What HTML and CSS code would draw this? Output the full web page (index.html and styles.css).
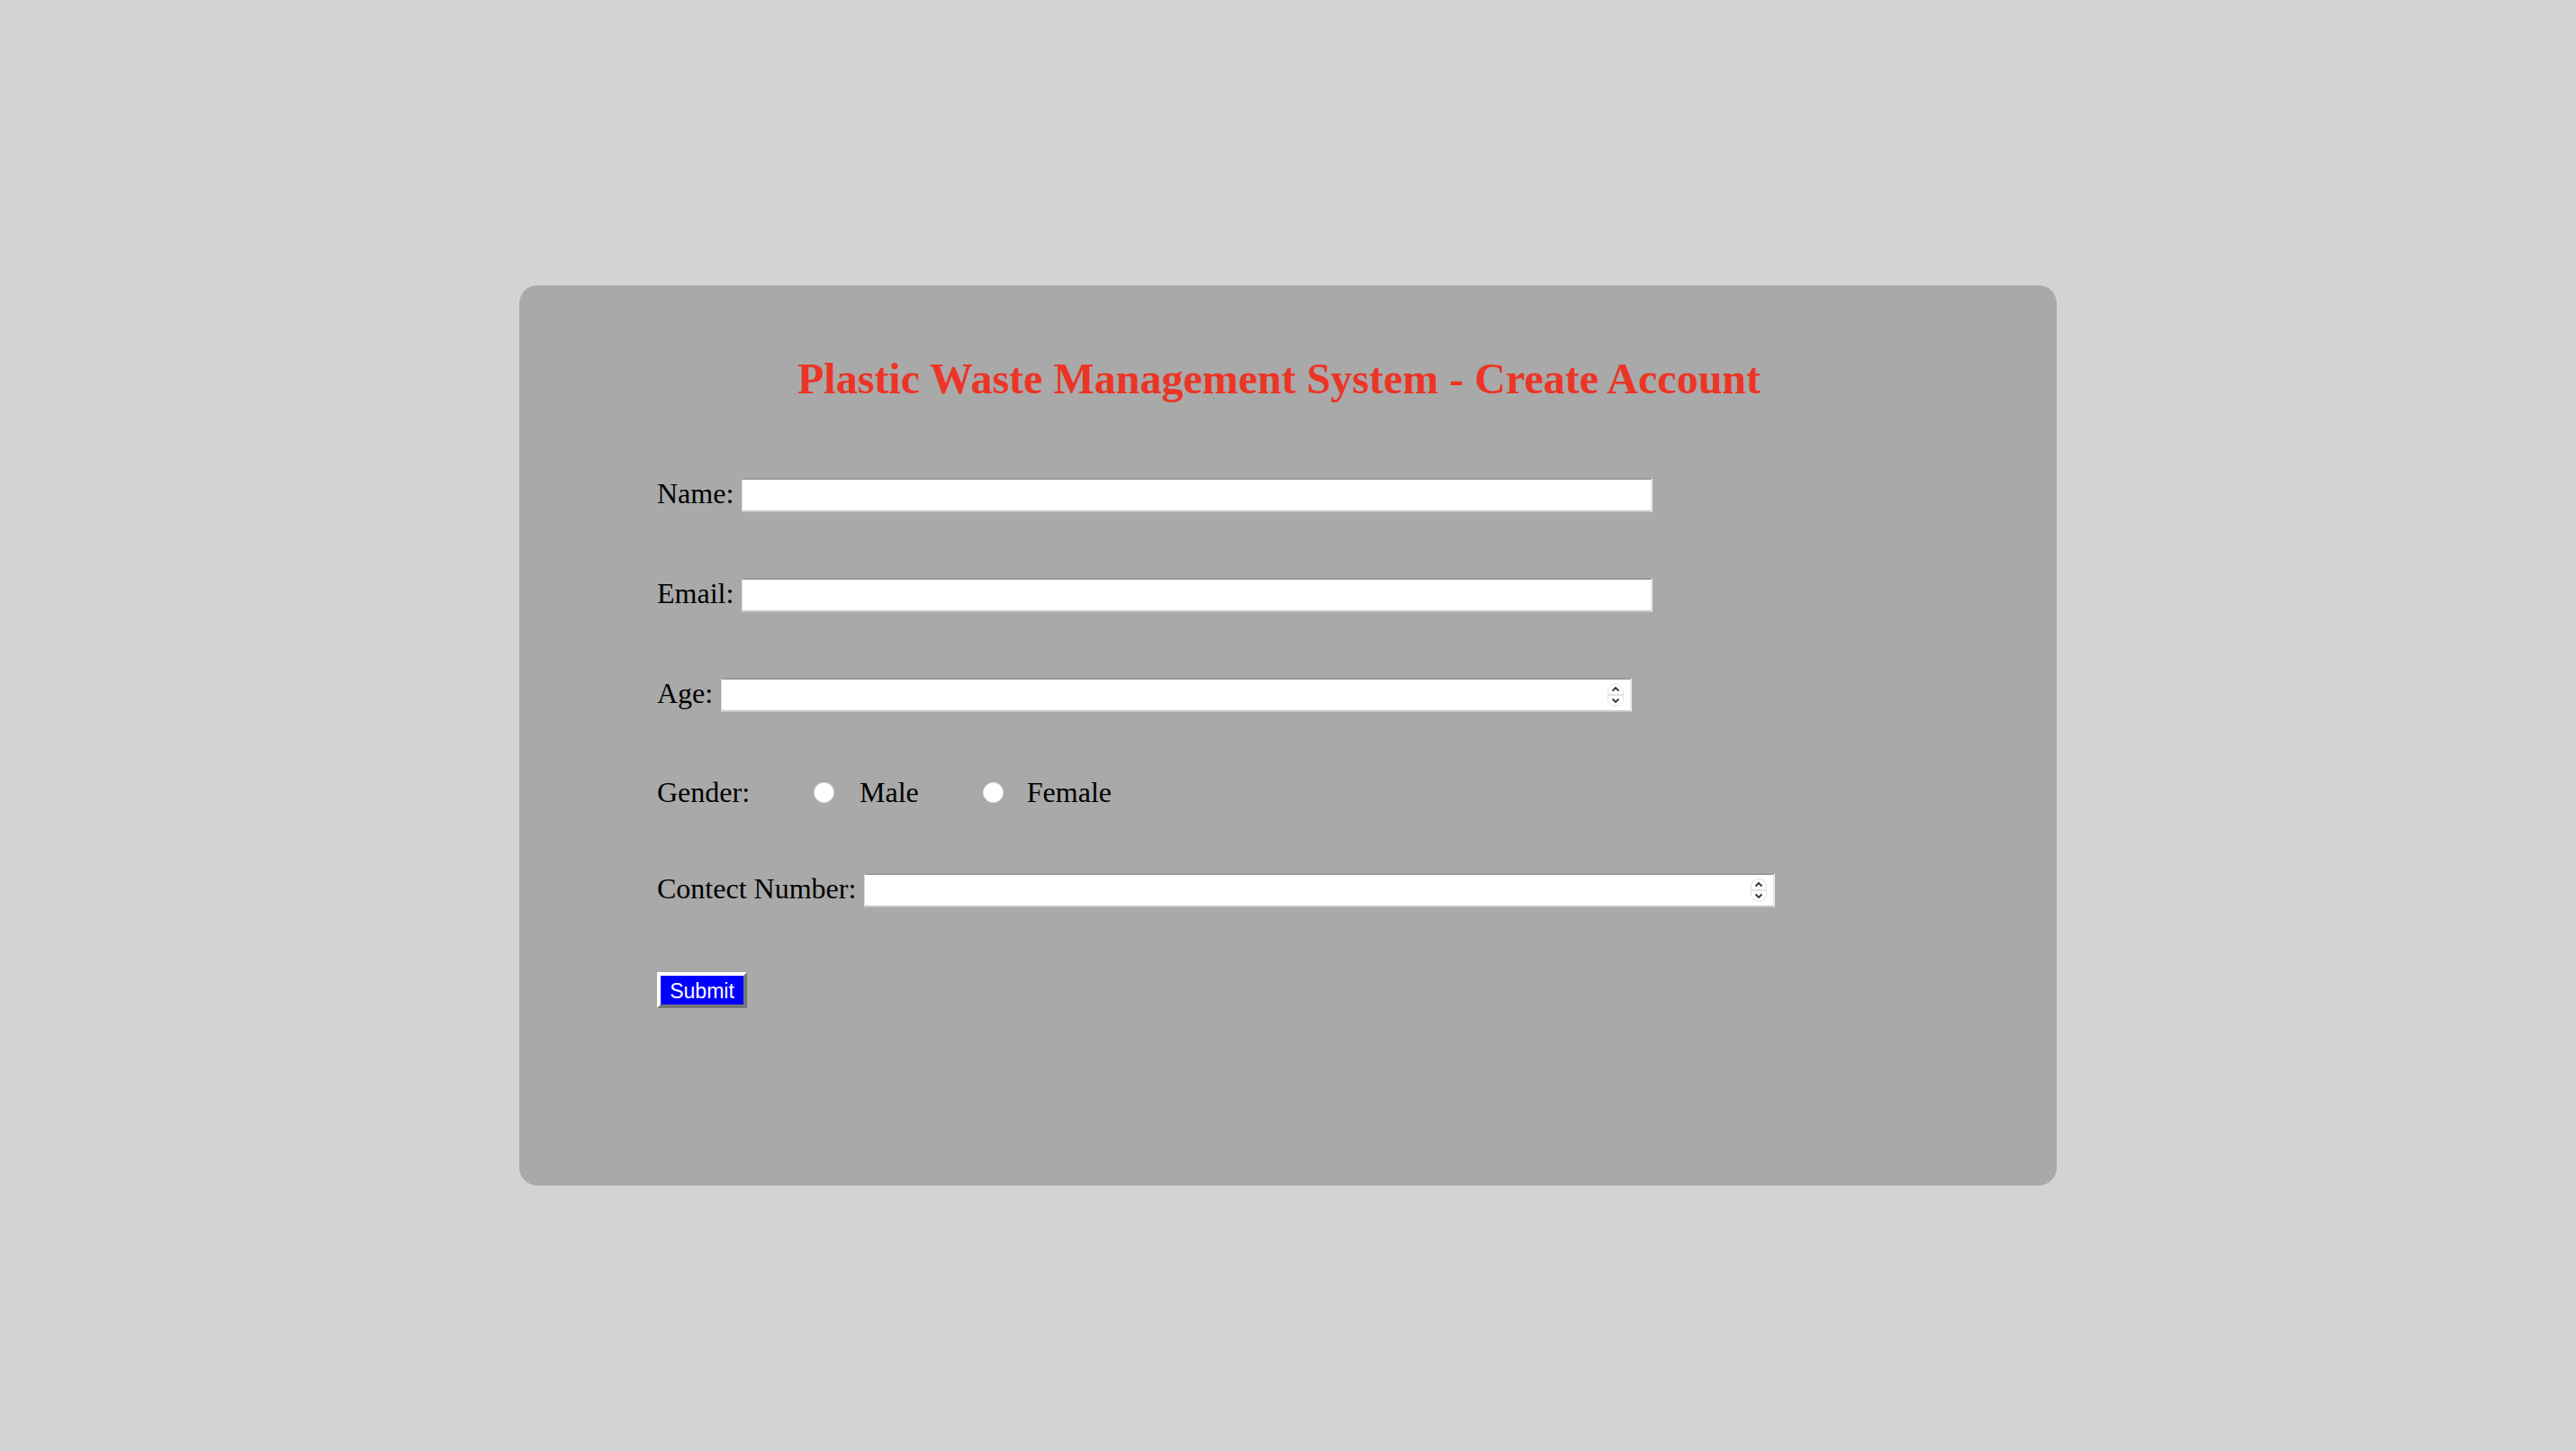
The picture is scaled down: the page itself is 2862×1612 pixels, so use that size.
FILE: index.html
```html
<!DOCTYPE html>
<html lang="en">
<head>
<meta charset="utf-8">
<title>Plastic Waste Management System - Create Account</title>
<link rel="stylesheet" href="styles.css">
</head>
<body>
<div class="card">
  <h2 class="title">Plastic Waste Management System - Create Account</h2>
  <form class="form">
    <div class="row">
      <label class="label">Name:</label>
      <input type="text" class="field">
    </div>
    <div class="row">
      <label class="label">Email:</label>
      <input type="email" class="field">
    </div>
    <div class="row row-age">
      <label class="label">Age:</label>
      <span class="num-wrap">
        <input type="number" class="field">
        <svg class="spin" viewBox="0 0 18 26" width="18" height="26">
          <rect x="0.5" y="0.5" width="17" height="25" rx="8.5" fill="#fff" stroke="#e2e2e2"/>
          <line x1="1" y1="13" x2="17" y2="13" stroke="#d8d8d8" stroke-width="1.5"/>
          <path d="M5.5 8.5 L9 5 L12.5 8.5" fill="none" stroke="#333" stroke-width="1.8"/>
          <path d="M5.5 17.5 L9 21 L12.5 17.5" fill="none" stroke="#333" stroke-width="1.8"/>
        </svg>
      </span>
    </div>
    <div class="row row-gender">
      <span class="label">Gender:</span>
      <input type="radio" name="gender" class="radio radio-male">
      <span class="opt">Male</span>
      <input type="radio" name="gender" class="radio radio-female">
      <span class="opt">Female</span>
    </div>
    <div class="row row-contact">
      <label class="label">Contect Number:</label>
      <span class="num-wrap">
        <input type="number" class="field">
        <svg class="spin" viewBox="0 0 18 26" width="18" height="26">
          <rect x="0.5" y="0.5" width="17" height="25" rx="8.5" fill="#fff" stroke="#e2e2e2"/>
          <line x1="1" y1="13" x2="17" y2="13" stroke="#d8d8d8" stroke-width="1.5"/>
          <path d="M5.5 8.5 L9 5 L12.5 8.5" fill="none" stroke="#333" stroke-width="1.8"/>
          <path d="M5.5 17.5 L9 21 L12.5 17.5" fill="none" stroke="#333" stroke-width="1.8"/>
        </svg>
      </span>
    </div>
    <div class="row-submit">
      <button type="button" class="submit">Submit</button>
    </div>
  </form>
</div>
</body>
</html>
```
FILE: styles.css
```css
html, body {
  margin: 0;
  padding: 0;
}
body {
  background: #d3d3d3;
  font-family: "Liberation Serif", "Times New Roman", serif;
  display: flex;
  justify-content: center;
  padding-top: 317px;
  min-height: 1612px;
  box-sizing: border-box;
}
.card {
  width: 1708px;
  height: 1000px;
  box-sizing: border-box;
  background: #a9a9a9;
  border-radius: 20px;
  padding: 76px 0 0 153px;
}
.title {
  margin: 0 0 0 -153px;
  font-size: 48px;
  line-height: 56px;
  font-weight: bold;
  color: #ec3526;
  text-align: center;
  padding-right: 20px;
}
.form {
  margin-top: 82px;
  display: flex;
  flex-direction: column;
  gap: 73px;
}
.row {
  display: flex;
  align-items: flex-start;
  height: 38px;
}
.label {
  font-size: 32px;
  line-height: 34px;
  color: #000;
  margin-right: 9px;
}
.field {
  width: 1012px;
  height: 38px;
  box-sizing: border-box;
  margin: 0;
  background: #fff;
  border: 1px solid #c4c4c4;
  border-top: 2px solid #9a9a9a;
  border-bottom: 2px solid #c8c8c8;
  border-left-color: #dedede;
  border-right: 2px solid #e8e8e8;
  padding: 0 6px;
  font-size: 26px;
  outline: none;
}
.field::-webkit-inner-spin-button,
.field::-webkit-outer-spin-button {
  -webkit-appearance: none;
  margin: 0;
}
.num-wrap {
  position: relative;
  display: inline-block;
  height: 38px;
}
.spin {
  position: absolute;
  right: 9px;
  top: 6px;
}
.row-gender {
  margin-top: -2px;
  height: 36px;
  align-items: center;
}
.row-gender .label {
  margin-right: 0;
  line-height: 36px;
}
.radio {
  -webkit-appearance: none;
  appearance: none;
  width: 23px;
  height: 23px;
  margin: 0;
  border-radius: 50%;
  background: #fff;
  border: 1px solid #e6e6e6;
  box-sizing: border-box;
}
.radio-male {
  margin-left: 71px;
  margin-right: 28px;
}
.radio-female {
  margin-left: 71px;
  margin-right: 26px;
}
.opt {
  font-size: 32px;
  line-height: 36px;
  color: #000;
}
.row-contact {
  margin-top: -1px;
}
.row-submit {
  margin-top: -1px;
  display: flex;
}
.submit {
  width: 100px;
  height: 40px;
  box-sizing: border-box;
  margin: 0;
  padding: 3px 0 0 0;
  background: #0000ff;
  color: #fff;
  font-family: "Liberation Sans", Arial, sans-serif;
  font-size: 23px;
  border-style: solid;
  border-width: 4px;
  border-color: #ffffff #777777 #777777 #ffffff;
}
```
